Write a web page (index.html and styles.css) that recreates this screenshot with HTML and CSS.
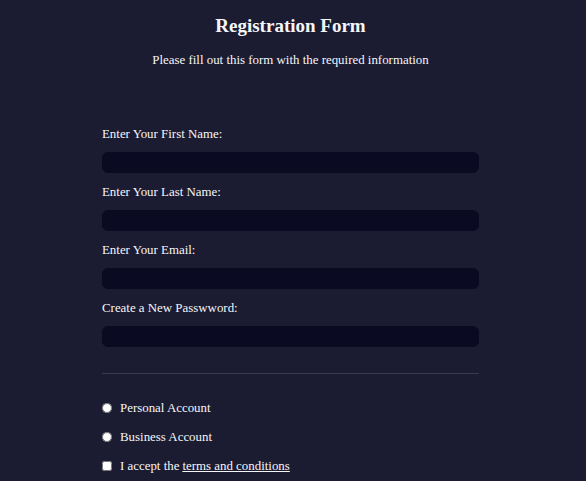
FILE: index.html
```html
<!DOCTYPE html>
<html lang="en">
<head>
<meta charset="utf-8">
<title>Registration Form</title>
<link rel="stylesheet" href="styles.css">
</head>
<body>
<main class="page">
  <h1 class="title">Registration Form</h1>
  <p class="subtitle">Please fill out this form with the required information</p>
  <form class="form">
    <div class="fields">
      <label class="field">Enter Your First Name: <input class="text-input" type="text"></label>
      <label class="field">Enter Your Last Name: <input class="text-input" type="text"></label>
      <label class="field">Enter Your Email: <input class="text-input" type="email"></label>
      <label class="field">Create a New Passwword: <input class="text-input" type="password"></label>
    </div>
    <div class="options">
      <label class="option"><input class="radio" type="radio" name="account"> Personal Account</label>
      <label class="option"><input class="radio" type="radio" name="account"> Business Account</label>
      <label class="option"><input class="check" type="checkbox"> I accept the <a class="link" href="#">terms and conditions</a></label>
    </div>
  </form>
</main>
</body>
</html>
```
FILE: styles.css
```css
html, body {
  margin: 0;
  padding: 0;
}
body {
  background: #1b1b32;
  color: #f5f6f7;
  font-family: "Liberation Serif", "Times New Roman", serif;
  font-size: 12.9px;
  width: 581px;
  height: 481px;
  overflow: hidden;
}
.page {
  display: flex;
  flex-direction: column;
  align-items: center;
}
.title {
  font-size: 19px;
  font-weight: bold;
  margin: 15px 0 0;
  line-height: 22px;
}
.subtitle {
  margin: 15px 0 0;
  line-height: 16px;
}
.form {
  width: 377px;
  display: flex;
  flex-direction: column;
}
.fields {
  display: flex;
  flex-direction: column;
  padding: 58px 0 26px;
  border-bottom: 1px solid #3b3b4f;
}
.field {
  display: block;
  line-height: 16px;
  margin-top: 11px;
}
.field:first-child {
  margin-top: 0;
}
.text-input {
  display: block;
  box-sizing: border-box;
  width: 100%;
  height: 21px;
  margin: 10px 0 0;
  background: #0a0a23;
  border: 1px solid #0a0a23;
  border-radius: 6px;
  color: #fff;
}
.options {
  display: flex;
  flex-direction: column;
  padding-top: 26px;
  gap: 13px;
}
.option {
  display: flex;
  align-items: center;
  line-height: 16px;
}
.radio, .check {
  margin: 0 8px 0 0;
  width: 10px;
  height: 10px;
}
.link {
  color: #f5f6f7;
  margin-left: 3px;
}
```
